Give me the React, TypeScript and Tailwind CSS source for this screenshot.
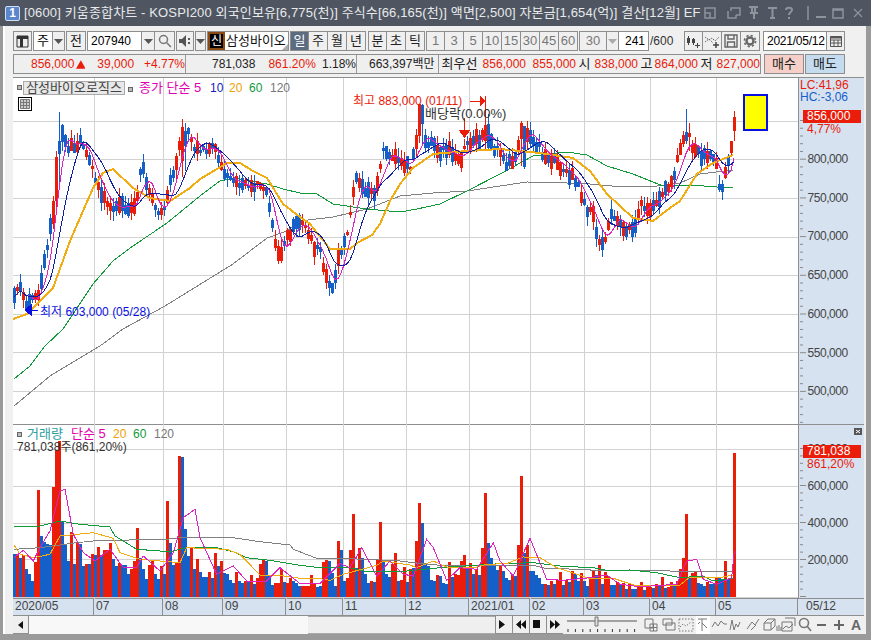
import type { ReactNode } from "react";

type Pt = [number, number];

// price line read off the chart, page pixels
const PRICE: Pt[] = [[13,298],[20,284],[25,306],[30,298],[37,295],[42,272],[48,240],[52,205],[56,150],[60,130],[63,133],[68,145],[75,146],[80,136],[85,150],[90,165],[95,177],[100,190],[110,205],[115,208],[120,205],[130,206],[135,204],[140,172],[143,166],[147,186],[150,196],[155,205],[160,212],[165,205],[170,178],[175,166],[182,132],[187,130],[193,146],[200,150],[207,147],[213,146],[218,156],[225,176],[232,181],[240,181],[250,190],[258,180],[265,186],[270,212],[275,245],[280,255],[287,235],[295,225],[303,220],[310,240],[320,252],[328,285],[333,290],[337,262],[345,240],[350,215],[355,178],[365,190],[375,192],[382,152],[390,155],[400,160],[410,166],[418,130],[425,140],[432,142],[440,150],[450,151],[460,160],[465,145],[472,140],[480,137],[487,128],[492,146],[498,150],[505,165],[515,155],[522,128],[527,132],[535,142],[545,155],[555,160],[565,170],[572,176],[580,190],[585,205],[593,215],[597,235],[603,245],[610,215],[620,220],[627,230],[634,225],[640,205],[650,205],[660,195],[670,185],[677,160],[685,137],[695,147],[700,155],[710,155],[716,165],[720,195],[725,170],[730,150],[735,122]];

const MA20: Pt[] = [[13,318],[27,313],[43,297],[53,287],[70,240],[80,217],[93,187],[103,172],[113,168],[133,187],[150,197],[170,200],[190,187],[200,178],[217,168],[227,162],[240,162],[253,170],[267,177],[283,203],[300,216],[310,223],[330,248],[350,248],[357,242],[372,234],[380,223],[390,200],[400,183],[413,167],[433,153],[467,150],[500,148],[540,152],[573,157],[590,170],[607,193],[633,217],[653,220],[670,207],[680,200],[697,173],[713,162],[733,154]];
const MA60: Pt[] = [[14,378],[30,365],[45,345],[63,328],[93,283],[113,260],[133,245],[167,222],[200,195],[220,180],[233,177],[267,183],[283,188],[300,192],[317,193],[333,203],[367,208],[400,211],[417,208],[440,203],[467,190],[500,173],[533,155],[567,151],[587,154],[607,165],[633,173],[663,185],[690,184],[717,186],[733,186]];
const MA120: Pt[] = [[14,405],[50,375],[100,345],[123,328],[165,305],[233,263],[267,237],[287,230],[300,220],[333,216],[367,208],[400,195],[433,192],[467,190],[500,185],[527,181],[567,182],[590,183],[623,186],[657,185],[680,182],[700,173],[733,169]];

// volume bars, colour + top as seen in 3x crops (y = 420 + top / 3)
const VOL =
  "b400 r398 b410 r403 b445 b460 b480 r423 r207 b345 b363 b368 b372 r198 r88 r60 b300 b372 b420 r333 b430 r365 b370 b435 r430 b430 r400 b402 r378 b403 r387 r387 r366 b415 b435 r425 b433 b433 b460 r445 r420 r320 b410 b445 b475 r432 r420 b460 b475 r435 b460 r240 b366 b432 r425 r105 b108 b323 b405 r378 b445 r413 b452 b468 b468 r452 b472 r396 b435 r420 b455 b458 b478 b487 r452 b480 b485 r480 b483 r462 b490 r470 r430 r414 b420 b465 b492 r486 r486 r443 b483 r486 r470 b480 b485 b495 r495 r495 r495 r462 r490 b498 b495 r423 r418 b420 b456 b495 r360 b387 b480 r472 r387 r279 b440 r380 b412 b460 b486 r480 b484 r415 r303 b420 b460 b467 r428 r396 b480 r476 r438 b483 r445 b440 r360 r246 b306 b430 b435 b478 b480 r462 b465 b487 b490 r423 b467 r460 r462 r420 r402 b445 r426 b460 r445 b462 r380 r216 b366 b410 b432 b447 r435 b450 b472 b478 r460 b465 r372 r165 b396 r372 b450 b450 b462 b472 b490 r490 b492 r480 b490 r478 r453 b492 r478 b482 r450 b458 b480 r456 b480 b495 r472 r447 b462 r432 b490 r452 r465 b492 b492 r483 b488 r487 b503 r490 b503 b503 r497 r482 b507 r497 r497 b500 r488 b492 r468 b500 r497 r483 b492 r480 r444 r411 r279 b467 r456 r450 b486 b490 b495 r484 b490 b490 r467 b472 b476 r420 b475 r475 r96";

const z = (pts: number[][], dx: number): Pt[] =>
  pts.map(([x, y]) => [x / 3 + dx, y / 3 + 420]);

const VMA120 = [...z([[42,385],[120,380],[230,365],[280,360],[340,358],[500,355],[540,350],[700,350],[780,362],[870,372],[880,385],[900,392]], 0), ...z([[0,393],[50,412],[100,412],[200,415],[300,420],[340,425],[420,433],[560,435],[700,433],[740,443],[870,445]], 300), ...z([[0,448],[120,448],[360,452],[430,453]], 590)];
const VMA60 = [...z([[42,318],[120,315],[180,300],[240,310],[330,318],[345,345],[410,385],[510,392],[560,380],[650,380],[700,392],[740,410],[810,418],[900,433]], 0), ...z([[0,433],[60,440],[150,440],[200,452],[300,452],[420,440],[600,428],[700,425],[780,435],[870,440]], 300), ...z([[0,438],[50,448],[120,447],[200,455],[270,470],[340,465],[370,480],[430,472]], 590)];
const VMA20 = [...z([[42,372],[60,400],[100,410],[150,400],[180,345],[280,335],[340,352],[360,395],[420,415],[540,425],[560,380],[680,385],[720,400],[780,462],[830,462],[900,472]], 0), ...z([[0,472],[60,473],[90,478],[130,460],[230,433],[250,420],[330,432],[350,440],[400,420],[440,438],[530,438],[560,430],[620,428],[670,408],[720,410],[770,440],[860,470]], 300), ...z([[0,473],[70,472],[140,495],[270,492],[300,468],[400,468],[430,462]], 590)];
const VMA5 = [...z([[42,410],[70,388],[100,420],[120,380],[150,330],[180,210],[195,205],[220,340],[250,395],[285,420],[330,385],[370,440],[410,440],[430,405],[480,450],[520,395],[550,290],[585,265],[600,350],[650,460],[700,435],[740,480],[800,480],[840,440],[890,480]], 0), ...z([[0,488],[60,488],[120,428],[150,440],[185,380],[230,465],[270,420],[310,460],[340,465],[380,355],[400,380],[440,478],[480,440],[530,445],[580,365],[600,420],[640,465],[690,352],[740,475],[790,478],[870,470]], 300), ...z([[0,470],[50,462],[90,490],[150,497],[260,490],[290,420],[320,415],[340,475],[380,490],[425,470],[433,390]], 590)];

const RED = "#ea1c0a";
const BLUE = "#1560c8";
const GRID_X = [94, 163, 223, 286, 343, 406, 469, 530, 584, 650, 716];

const rnd = (n: number) => {
  const v = Math.sin(n * 12.9898) * 43758.5453;
  return v - Math.floor(v);
};

const lerp = (pts: Pt[], x: number) => {
  for (let i = 1; i < pts.length; i++) {
    if (x <= pts[i][0]) {
      const [x0, y0] = pts[i - 1];
      const [x1, y1] = pts[i];
      return y0 + ((y1 - y0) * (x - x0)) / (x1 - x0);
    }
  }
  return pts[pts.length - 1][1];
};

const bars = VOL.split(" ").map((s) => ({ up: s[0] === "r", top: 420 + Number(s.slice(1)) / 3 }));
const mids = bars.map((_, i) => lerp(PRICE, 14 + 3 * i));

const sma = (n: number) =>
  mids.map((_, i) => {
    const w = mids.slice(Math.max(0, i - n + 1), i + 1);
    return [14 + 3 * i, w.reduce((a, b) => a + b, 0) / w.length] as Pt;
  });

// [wick top, body top, body bottom, wick bottom, up]
const SPECIAL: Record<number, [number, number, number, number, boolean]> = {
  13: [195, 200, 223, 228, true],
  14: [150, 156, 200, 212, true],
  15: [111, 140, 153, 183, false],
  16: [123, 124, 141, 150, false],
  56: [118, 126, 160, 176, true],
  57: [122, 130, 145, 170, false],
  135: [103, 103, 135, 142, true],
  136: [103, 104, 123, 145, false],
  157: [95, 124, 140, 148, true],
  158: [113, 123, 147, 150, false],
  169: [120, 122, 138, 165, true],
  170: [125, 125, 166, 168, false],
  224: [108, 131, 140, 143, false],
  225: [122, 132, 136, 150, true],
  240: [110, 116, 130, 140, true],
};

const candles = bars.map((b, i) => {
  const s = SPECIAL[i];
  if (s) return { x: 13 + 3 * i, wt: s[0], t: s[1], b: s[2], wb: s[3], up: s[4] };
  const h = 3 + rnd(i + 1) * 13;
  const t = mids[i] + (rnd(i + 900) - 0.5) * 8 - h / 2;
  return { x: 13 + 3 * i, wt: t - rnd(i + 300) * 9, t, b: t + h, wb: t + h + rnd(i + 600) * 9, up: b.up };
});

const line = (pts: Pt[]) => pts.map(([x, y]) => `${x.toFixed(1)},${y.toFixed(1)}`).join(" ");

function Poly({ pts, color, w = 1 }: { pts: Pt[]; color: string; w?: number }) {
  return <polyline points={line(pts)} fill="none" stroke={color} strokeWidth={w} />;
}

function Btn({ children, w = "w-[19px]", className = "" }: { children?: ReactNode; w?: string; className?: string }) {
  return (
    <div className={`${w} ${className} h-[20px] shrink-0 flex items-center justify-center border border-[#8e8e8e] bg-[#efefef] text-[13px] text-[#222]`}>
      {children}
    </div>
  );
}

function Caret({ color = "#555" }: { color?: string }) {
  return (
    <svg width="9" height="5" viewBox="0 0 9 5">
      <path d="M0 0h9L4.5 5z" fill={color} />
    </svg>
  );
}

function PriceAxis() {
  const labels = [800, 750, 700, 650, 600, 550, 500];
  const ticks = [];
  for (let k = 0; k < 44; k++) ticks.push(k);
  return (
    <svg className="absolute inset-0" width="65" height="347" viewBox="798 77 65 347">
      {ticks.map((k) => {
        const y = 119.5 + k * 7.74;
        return <line key={k} x1="799" x2={k % 5 === 0 ? 805 : 802} y1={y} y2={y} stroke="#8a8a8a" />;
      })}
      {labels.map((v, i) => (
        <text key={v} x="806.5" y={162 + i * 38.7} fontSize="12" fill="#444" letterSpacing="-0.45">
          {v},000
        </text>
      ))}
    </svg>
  );
}

function VolumeAxis() {
  const labels = ["800,000", "600,000", "400,000", "200,000"];
  const ticks = [];
  for (let k = 0; k < 24; k++) ticks.push(k);
  return (
    <svg className="absolute inset-0" width="65" height="174" viewBox="798 424 65 174">
      {ticks.map((k) => {
        const y = 447.5 + k * 7.4;
        return <line key={k} x1="799" x2={k % 5 === 0 ? 805 : 802} y1={y} y2={y} stroke="#8a8a8a" />;
      })}
      {labels.map((v, i) => (
        <text key={v} x="806.5" y={452 + i * 36.9} fontSize="12" fill="#444" letterSpacing="-0.45">
          {v}
        </text>
      ))}
    </svg>
  );
}

function PriceChart() {
  return (
    <svg className="absolute inset-0" width="785" height="347" viewBox="13 77 785 347" shapeRendering="crispEdges">
      {GRID_X.map((x) => (
        <line key={x} x1={x} x2={x} y1="77" y2="424" stroke="#d2d2d2" />
      ))}
      {[120, 158, 197, 236, 274, 313, 351, 390].map((y) => (
        <line key={y} x1="13" x2="798" y1={y} y2={y} stroke="#d2d2d2" />
      ))}
      <Poly pts={MA120} color="#808080" />
      <Poly pts={MA60} color="#109a3a" />
      {candles.map((c) => {
        const col = c.up ? RED : BLUE;
        return (
          <g key={c.x}>
            <rect x={c.x + 1} y={c.wt} width="1" height={c.wb - c.wt} fill={col} />
            <rect x={c.x} y={c.t} width="3" height={Math.max(1, c.b - c.t)} fill={col} />
          </g>
        );
      })}
      <Poly pts={MA20} color="#f0ac10" w={2} />
      <Poly pts={sma(5)} color="#e020c0" />
      <Poly pts={sma(10)} color="#1020a0" />
      {/* high / low / ex-dividend markers */}
      <path d="M470 100h14M480 95l5 5-5 5z" stroke={RED} fill={RED} />
      <path d="M464 117v12M459 129h11l-5.5 7z" stroke={RED} fill={RED} />
      <path d="M38 309H26M31 304l-6 5 6 5z" stroke="#0a10e0" fill="#0a10e0" />
      <rect x="744" y="94" width="23" height="35" fill="#ffff00" stroke="#0a10e0" strokeWidth="2" />
    </svg>
  );
}

function VolumeChart() {
  return (
    <svg className="absolute inset-0" width="785" height="174" viewBox="13 424 785 174" shapeRendering="crispEdges">
      {GRID_X.map((x) => (
        <line key={x} x1={x} x2={x} y1="424" y2="598" stroke="#d2d2d2" />
      ))}
      {[448, 485, 522, 558, 596].map((y) => (
        <line key={y} x1="13" x2="798" y1={y} y2={y} stroke="#d2d2d2" />
      ))}
      {bars.map((b, i) => (
        <rect key={i} x={13 + 3 * i} y={b.top} width="3" height={596 - b.top} fill={b.up ? RED : BLUE} />
      ))}
      <Poly pts={VMA120} color="#808080" />
      <Poly pts={VMA60} color="#109a3a" />
      <Poly pts={VMA20} color="#f0ac10" />
      <Poly pts={VMA5} color="#e020c0" />
    </svg>
  );
}

function Square() {
  return <span className="inline-block w-[5px] h-[5px] border border-[#666] bg-[#bbb] shrink-0" />;
}

function TitleBar() {
  return (
    <div className="h-[26px] shrink-0 bg-[#4f5661] flex items-center text-[#e8eaec] text-[13px] pl-[5px] pr-[8px] whitespace-nowrap overflow-hidden">
      <span className="w-[15px] h-[15px] bg-[#5b86cc] border border-[#cfe0f5] rounded-[2px] flex items-center justify-center text-white text-[12px] font-bold mr-[4px] shrink-0">
        1
      </span>
      <span className="w-[693px] overflow-hidden tracking-[0.14px]">
        [0600] 키움종합차트 - KOSPI200 외국인보유[6,775(천)] 주식수[66,165(천)] 액면[2,500] 자본금[1,654(억)] 결산[12월] EF
      </span>
      <svg width="146" height="14" viewBox="0 0 146 14" className="ml-[1px] shrink-0" fill="none" stroke="#8e949c" strokeWidth="1.5">
        <path d="M2 2h10v10H2zM2 7h5v5" />
        <path d="M25 5v7h8V9M28 5V2h9v7h-4" />
        <path d="M46 1h9M47 7h8M49 1v6M52 1v6M51 7v6" strokeWidth="2" />
        <path d="M65 2h9M69.5 2v10M67 12h5" strokeWidth="2" />
        <path d="M83 4c0-3 6-3 6 0 0 2-3 2-3 5M86 11v2" strokeWidth="2" />
        <path d="M105 0v14" />
        <path d="M113 11h10" strokeWidth="2" />
        <path d="M131 3h10v9h-10zM131 4h10" transform="translate(-1 0)" />
      </svg>
      <svg width="10" height="10" viewBox="0 0 10 10" className="ml-[4px] shrink-0" stroke="#8e949c" strokeWidth="1.2">
        <path d="M1 1l8 8M9 1L1 9" />
      </svg>
    </div>
  );
}

function ToolRow() {
  const periods = ["일", "주", "월", "년"];
  const units = ["분", "초", "틱"];
  const mins = ["1", "3", "5", "10", "15", "30", "45", "60"];
  return (
    <div className="flex h-[20px] items-center">
      <Btn>
        <svg width="13" height="13" viewBox="0 0 13 13">
          <path d="M1 1h11v11H1z" fill="none" stroke="#333" />
          <path d="M1 1h11v3H1zM4 4h3v8H4z" fill="#333" />
        </svg>
      </Btn>
      <div className="ml-[1px] flex">
        <div className="w-[20px] h-[20px] border border-[#8e8e8e] bg-white flex items-center justify-center text-[13px]">주</div>
        <Btn w="w-[12px]" className="border-l-0"><Caret /></Btn>
      </div>
      <Btn className="ml-[1px] w-[20px]" w="w-[20px]">전</Btn>
      <div className="ml-[1px] flex">
        <div className="w-[55px] h-[20px] border border-[#8e8e8e] bg-white pl-[3px] text-[12px] leading-[18px]">207940</div>
        <Btn w="w-[13px]" className="border-l-0"><Caret /></Btn>
        <Btn w="w-[20px]" className="border-l-0">
          <svg width="14" height="14" viewBox="0 0 14 14" fill="none" stroke="#777" strokeWidth="1.5">
            <circle cx="5.5" cy="5.5" r="4" />
            <path d="M8.5 8.5l4.5 4.5" />
          </svg>
        </Btn>
      </div>
      <div className="ml-[1px] flex">
        <Btn w="w-[18px]">
          <svg width="13" height="12" viewBox="0 0 13 12" fill="#555">
            <path d="M0 4h3l4-4v12L3 8H0zM9 3h2v2H9zM9 7h2v2H9z" />
          </svg>
        </Btn>
        <Btn w="w-[11px]" className="ml-[1px]"><Caret /></Btn>
      </div>
      <div className="ml-[1px] flex h-[20px] w-[82px] border border-[#8e8e8e] bg-white relative">
        <div className="w-[17px] shrink-0 h-full bg-black border-2 border-[#8a4a14] text-white flex items-center justify-center text-[12px]">신</div>
        <div className="pl-[1px] text-[13px] leading-[18px] text-[#111] whitespace-nowrap">삼성바이오</div>
        <span className="absolute right-0 bottom-0 w-0 h-0 border-l-[6px] border-l-transparent border-b-[6px] border-b-[#aaa]" />
      </div>
      <div className="ml-[1px] flex">
        {periods.map((p, i) => (
          <Btn key={p} className={i === 0 ? "!bg-[#5b6b80] !text-white" : "border-l-0"}>
            {p}
          </Btn>
        ))}
      </div>
      <div className="ml-[2px] flex">
        {units.map((p, i) => (
          <Btn key={p} className={i > 0 ? "border-l-0" : ""}>{p}</Btn>
        ))}
      </div>
      <div className="flex ml-[1px]">
        {mins.map((p, i) => (
          <Btn key={p} className={`text-[12px] !text-[#777] ${i > 0 ? "border-l-0" : ""}`}>{p}</Btn>
        ))}
      </div>
      <div className="ml-[1px] flex">
        <Btn w="w-[28px]" className="text-[12px] !text-[#777]">30</Btn>
        <Btn w="w-[12px]" className="border-l-0"><Caret color="#aaa" /></Btn>
      </div>
      <div className="w-[30px] h-[20px] border border-[#8e8e8e] border-l-0 bg-white text-right pr-[3px] text-[12px] leading-[18px]">241</div>
      <span className="ml-[1px] w-[34px] text-[12px] text-[#333]">/600</span>
      <div className="flex">
        <Btn>
          <svg width="15" height="13" viewBox="0 0 15 13" fill="#444">
            <path d="M2 1h1v2h1v5H3v2H2V8H1V3h1zM7 3h1v1h1v4H8v2H7V8H6V4h1zM11 8h1v2h2v1h-2v2h-1v-2H9v-1h2z" />
          </svg>
        </Btn>
        <Btn className="border-l-0">
          <svg width="15" height="13" viewBox="0 0 15 13" fill="none" stroke="#666">
            <path d="M0 2l4 3 3-2 3 3 4-4M0 7l4-3 4 4" strokeDasharray="1.5 1" />
            <path d="M11 7v6M8 10h6" stroke="#444" strokeWidth="1.5" />
          </svg>
        </Btn>
        <Btn className="border-l-0">
          <svg width="14" height="14" viewBox="0 0 14 14" fill="none" stroke="#666" strokeWidth="1.4">
            <path d="M1 1h12v12H1zM4 1v4h6V1M3.5 13V8h7v5" />
          </svg>
        </Btn>
        <Btn className="border-l-0">
          <svg width="14" height="14" viewBox="0 0 14 14" fill="none" stroke="#666">
            <circle cx="7" cy="7" r="3.5" strokeWidth="2.4" />
            <circle cx="7" cy="7" r="5.6" strokeWidth="1.6" strokeDasharray="2.2 2.2" />
          </svg>
        </Btn>
      </div>
      <div className="ml-[3px] flex">
        <div className="w-[64px] h-[20px] border border-[#8e8e8e] bg-white pl-[3px] text-[12px] leading-[18px] tracking-[-0.25px] whitespace-nowrap">2021/05/12</div>
        <Btn w="w-[18px]" className="border-l-0">
          <svg width="12" height="11" viewBox="0 0 12 11" fill="none" stroke="#555">
            <path d="M.5.5h11v10H.5zM.5 4h11M4 4v6M8 4v6M.5 7h11" />
            <path d="M.5 1.5h11" strokeWidth="2" />
          </svg>
        </Btn>
      </div>
    </div>
  );
}

function QuoteRow() {
  return (
    <div className="flex h-[20px] items-center text-[12px] whitespace-nowrap">
      <div className="w-[748px] h-[20px] flex border border-[#8e8e8e] bg-[#efefef] leading-[18px]">
        <div className="w-[172px] flex text-[#e81a0a] pl-[17px] border-r border-[#999]">
          <span className="w-[46px]">856,000</span>
          <svg width="10" height="9" viewBox="0 0 10 9" className="mt-[5px]"><path d="M5 0l5 9H0z" fill={RED} /></svg>
          <span className="ml-[12px] w-[48px]">39,000</span>
          <span>+4.77%</span>
        </div>
        <div className="w-[171px] flex pl-[26px] border-r border-[#999]">
          <span className="w-[58px] text-[#222]">781,038</span>
          <span className="w-[55px] text-[#e81a0a]">861.20%</span>
          <span className="text-[#222]">1.18%</span>
        </div>
        <div className="w-[82px] pl-[12px] border-r border-[#999] text-[#222]">663,397백만</div>
        <div className="flex-1 flex pl-[3px] text-[#222]">
          <span className="w-[41px] text-[13px]">최우선</span>
          <span className="w-[50px] text-[#e81a0a]">856,000</span>
          <span className="w-[46px] text-[#e81a0a]">855,000</span>
          <span className="w-[16px] text-[13px]">시</span>
          <span className="w-[46px] text-[#e81a0a]">838,000</span>
          <span className="w-[14px] text-[13px]">고</span>
          <span className="w-[46px] text-[#e81a0a]">864,000</span>
          <span className="w-[16px] text-[13px]">저</span>
          <span className="text-[#e81a0a]">827,000</span>
        </div>
      </div>
      <div className="ml-[3px] w-[40px] h-[20px] border border-[#8e8e8e] bg-[#f5cfc8] text-center text-[13px] leading-[18px] text-[#222]">매수</div>
      <div className="ml-[1px] w-[40px] h-[20px] border border-[#8e8e8e] bg-[#c5dcf0] text-center text-[13px] leading-[18px] text-[#222]">매도</div>
    </div>
  );
}

function Pane() {
  return (
    <div className="flex h-[347px] border-t border-[#8e8e8e]">
      <div className="relative w-[785px] bg-white text-[12px] whitespace-nowrap">
        <PriceChart />
        <div className="relative flex items-center pl-[4px] pt-[2px] h-[17px]">
          <Square />
          <span className="ml-[1px] w-[102px] h-[14px] border border-[#aaa] bg-[#e8e8e8] text-center leading-[12px] text-[#444] text-[13px]">삼성바이오로직스</span>
          <span className="ml-[3px]"><Square /></span>
          <span className="ml-[6px] w-[61px] text-[13px] text-[#e000b0]">종가 단순 5</span>
          <span className="ml-[10px] w-[19px] text-[#1020c0]">10</span>
          <span className="w-[20px] text-[#f0a000]">20</span>
          <span className="w-[21px] text-[#109a3a]">60</span>
          <span className="text-[#777]">120</span>
        </div>
        <div className="relative ml-[5px] mt-[2px] w-[14px] h-[14px] border border-black p-[1px]">
          <svg width="10" height="10" viewBox="0 0 10 10" fill="#ccc" stroke="#777">
            <path d="M.5.5h9v9h-9zM.5 3.5h9M.5 6.5h9M3.5.5v9M6.5.5v9" />
          </svg>
        </div>
        <span className="absolute left-[340px] top-[14px] text-[#e81a0a]">최고 883,000 (01/11)</span>
        <span className="absolute left-[412px] top-[26px] text-[#333] text-[13px]">배당락(0.00%)</span>
        <span className="absolute left-[27px] top-[225px] text-[#0a10e0]">최저 603,000 (05/28)</span>
      </div>
      <div className="relative w-[66px] bg-[#d6e2f0] border-l border-[#8e8e8e] text-[12px] leading-[11px] whitespace-nowrap">
        <PriceAxis />
        <div className="absolute left-[1px] top-[2px] text-[#e81a0a]">LC:41,96</div>
        <div className="absolute left-[1px] top-[14px] text-[#1560c8]">HC:-3,06</div>
        <div className="absolute left-[4px] top-[32px] w-[58px] h-[13px] bg-[#ea1c0a] text-white pl-[4px] leading-[13px]">856,000</div>
        <div className="absolute left-[8px] top-[46px] text-[#e81a0a]">4,77%</div>
      </div>
    </div>
  );
}

function VolumePane() {
  return (
    <div className="flex h-[174px] border-t border-[#8e8e8e]">
      <div className="relative w-[785px] bg-white text-[12px] whitespace-nowrap">
        <VolumeChart />
        <div className="relative flex items-center pl-[4px] pt-[2px] h-[16px]">
          <Square />
          <span className="ml-[5px] w-[44px] text-[13px] text-[#2a9d9d]">거래량</span>
          <span className="w-[42px] text-[13px] text-[#e000b0]">단순 5</span>
          <span className="w-[20px] text-[#f0a000]">20</span>
          <span className="w-[21px] text-[#109a3a]">60</span>
          <span className="text-[#777]">120</span>
        </div>
        <div className="relative pl-[4px] text-[#333] leading-[13px]">781,038주(861,20%)</div>
      </div>
      <div className="relative w-[66px] bg-[#d6e2f0] border-l border-[#8e8e8e] text-[12px] leading-[12px] whitespace-nowrap">
        <VolumeAxis />
        <svg className="absolute right-[2px] top-[3px]" width="8" height="7" viewBox="0 0 8 7" stroke="#fff">
          <rect width="8" height="7" fill="#555" stroke="none" />
          <path d="M2 2l4 3M6 2L2 5" />
        </svg>
        <div className="absolute left-[4px] top-[20px] w-[58px] h-[13px] bg-[#ea1c0a] text-white pl-[4px] leading-[13px]">781,038</div>
        <div className="absolute left-[8px] top-[33px] text-[#e81a0a]">861,20%</div>
      </div>
    </div>
  );
}

function DateAxis() {
  const cells: [string, number][] = [["2020/05", 81], ["07", 69], ["08", 60], ["09", 63], ["10", 57], ["11", 63], ["12", 63], ["2021/01", 61], ["02", 54], ["03", 66], ["04", 66], ["05", 82]];
  return (
    <div className="flex h-[18px] border-t border-b border-[#8e8e8e] bg-[#d6e2f0] text-[12px] text-[#444] leading-[15px]">
      {cells.map(([t, w]) => (
        <div key={t} style={{ width: w }} className="border-r border-[#8e8e8e] pl-[2px] whitespace-nowrap">{t}</div>
      ))}
      <div className="flex-1 pl-[8px]">05/12</div>
    </div>
  );
}

function ScrollRow() {
  return (
    <div className="flex h-[18px] items-stretch">
      <div className="w-[16px] bg-[#efefef] border-r border-b border-[#8e8e8e] flex items-center justify-center">
        <svg width="5" height="8" viewBox="0 0 5 8"><path d="M5 0v8L0 4z" fill="#111" /></svg>
      </div>
      <div className="w-[279px] bg-[#f8f8f8]" />
      <div className="w-[187px] bg-[#efefef] border-t border-b border-[#aaa]" />
      {["M0 0l6 4.5L0 9z", "M5 0v9L0 4.5zM10 0v9L5 4.5z", "M0 0h7v8H0z", "M0 0l5 4.5L0 9zM5 0l5 4.5L5 9z"].map((d) => (
        <div key={d} className="w-[17px] bg-[#efefef] border-l border-b border-[#8e8e8e] flex items-center justify-center">
          <svg width="10" height="9" viewBox="0 0 10 9"><path d={d} fill="#111" /></svg>
        </div>
      ))}
      <svg width="250" height="18" viewBox="0 0 250 18" className="shrink-0" fill="none" stroke="#777">
        {/* playback speed slider */}
        <path d="M4 5h70" strokeWidth="1.5" stroke="#888" />
        <path d="M32 1h3v9h-3z" fill="#ddd" />
        {[0, 1, 2, 3, 4, 5, 6, 7, 8, 9].map((k) => (
          <path key={k} d={`M${5 + k * 7.4} 13v3`} stroke="#333" />
        ))}
        <path d="M82 3h8v9h-8zM87 8h7v7h-7zM87 11.5h7M90.5 8v7" />
        <path d="M100 3h9v6h-9zM103 7h9v7h-9z" />
        <path d="M116 3h14M116 15h14M116 3v12M130 3v12M117 11l3-3 3 2 5-4" strokeDasharray="1.5 1.5" />
        <rect x="133" y="0" width="14" height="18" fill="#fff" stroke="none" />
        <path d="M135 3h9M139 3v12M137 6l-2 2M139 7l5 5" />
        <path d="M149 11l3-5 3 4 3-5 3 3 3 0" />
        <path d="M167 14l2-10 2 10 2-6 2 3 2-5" />
        <path d="M184 13l5-7 3 3 4-6M188 14l5-5" />
        <path d="M201 7l4-4h7v7l-4 4h-7zM201 7h7v7M208 7l4-4M214 10v5M216 9v6M218 11v4" />
        <path d="M219 6h10v9h-10zM222 2h10v8M220 13l3-3 3 2 4-4" />
        <circle cx="241" cy="7" r="4.5" strokeWidth="1.6" />
        <path d="M244 10l4 5" strokeWidth="1.6" />
      </svg>
      <div className="flex items-center text-[#666] font-bold text-[14px]">
        <span className="ml-[4px] w-[9px] h-[2px] bg-[#666]" />
        <svg width="10" height="10" viewBox="0 0 10 10" className="ml-[8px]"><path d="M4 0h2v4h4v2H6v4H4V6H0V4h4z" fill="#666" /></svg>
        <span className="ml-[7px]">A</span>
      </div>
    </div>
  );
}

export default function App() {
  return (
    <div className="w-[871px] h-[640px] flex flex-col overflow-hidden bg-[#9a9a9a] [font-family:'Liberation_Sans','Noto_Sans_CJK_KR',sans-serif]">
      <TitleBar />
      <div className="flex-1 min-h-0 ml-[3px] mr-[5px] mb-[6px] border-l-2 border-white bg-[#f0f0f0] pl-[8px] pr-[2px] pt-[5px] flex flex-col">
        <ToolRow />
        <div className="mt-[3px]"><QuoteRow /></div>
        <div className="mt-[3px] w-[851px]">
          <Pane />
          <VolumePane />
          <DateAxis />
          <ScrollRow />
        </div>
      </div>
    </div>
  );
}
